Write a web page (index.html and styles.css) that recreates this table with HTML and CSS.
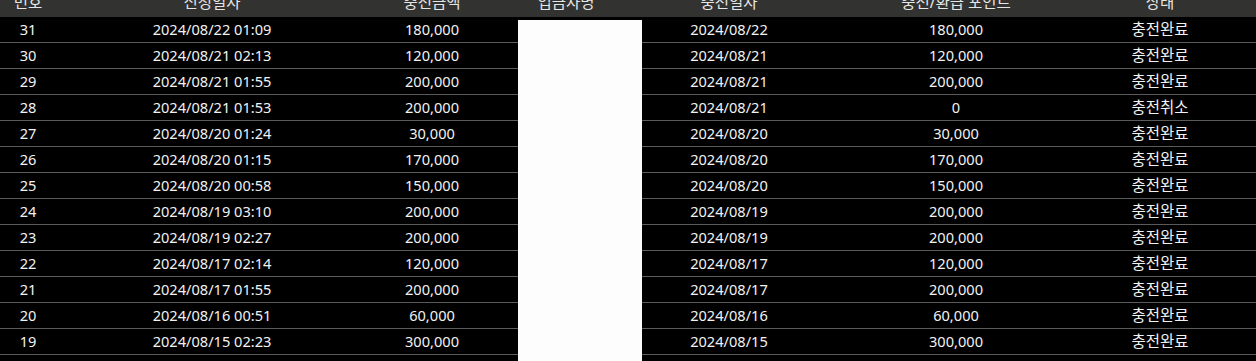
FILE: index.html
```html
<!DOCTYPE html>
<html lang="ko">
<head>
<meta charset="utf-8">
<title>충전내역</title>
<link rel="stylesheet" href="styles.css">
</head>
<body>
<div class="wrap">
  <table class="list">
    <colgroup>
      <col class="c-no"><col class="c-req"><col class="c-amt"><col class="c-name"><col class="c-date"><col class="c-pt"><col class="c-st">
    </colgroup>
    <thead>
      <tr><th>번호</th><th>신청일자</th><th>충전금액</th><th>입금자명</th><th>충전일자</th><th>충전/환급 포인트</th><th class="last">상태</th></tr>
    </thead>
    <tbody>
      <tr><td>31</td><td>2024/08/22 01:09</td><td>180,000</td><td></td><td>2024/08/22</td><td>180,000</td><td class="last">충전완료</td></tr>
      <tr><td>30</td><td>2024/08/21 02:13</td><td>120,000</td><td></td><td>2024/08/21</td><td>120,000</td><td class="last">충전완료</td></tr>
      <tr><td>29</td><td>2024/08/21 01:55</td><td>200,000</td><td></td><td>2024/08/21</td><td>200,000</td><td class="last">충전완료</td></tr>
      <tr><td>28</td><td>2024/08/21 01:53</td><td>200,000</td><td></td><td>2024/08/21</td><td>0</td><td class="last">충전취소</td></tr>
      <tr><td>27</td><td>2024/08/20 01:24</td><td>30,000</td><td></td><td>2024/08/20</td><td>30,000</td><td class="last">충전완료</td></tr>
      <tr><td>26</td><td>2024/08/20 01:15</td><td>170,000</td><td></td><td>2024/08/20</td><td>170,000</td><td class="last">충전완료</td></tr>
      <tr><td>25</td><td>2024/08/20 00:58</td><td>150,000</td><td></td><td>2024/08/20</td><td>150,000</td><td class="last">충전완료</td></tr>
      <tr><td>24</td><td>2024/08/19 03:10</td><td>200,000</td><td></td><td>2024/08/19</td><td>200,000</td><td class="last">충전완료</td></tr>
      <tr><td>23</td><td>2024/08/19 02:27</td><td>200,000</td><td></td><td>2024/08/19</td><td>200,000</td><td class="last">충전완료</td></tr>
      <tr><td>22</td><td>2024/08/17 02:14</td><td>120,000</td><td></td><td>2024/08/17</td><td>120,000</td><td class="last">충전완료</td></tr>
      <tr><td>21</td><td>2024/08/17 01:55</td><td>200,000</td><td></td><td>2024/08/17</td><td>200,000</td><td class="last">충전완료</td></tr>
      <tr><td>20</td><td>2024/08/16 00:51</td><td>60,000</td><td></td><td>2024/08/16</td><td>60,000</td><td class="last">충전완료</td></tr>
      <tr><td>19</td><td>2024/08/15 02:23</td><td>300,000</td><td></td><td>2024/08/15</td><td>300,000</td><td class="last">충전완료</td></tr>
    </tbody>
  </table>
  <div class="redact"></div>
</div>
</body>
</html>
```

FILE: styles.css
```css
html, body {
  margin: 0;
  padding: 0;
  background: #000;
  overflow: hidden;
}
body {
  font-family: "Noto Sans", "Noto Sans CJK KR", sans-serif;
  font-size: 14.6px;
  color: #f2f2f2;
}
.wrap {
  position: relative;
  height: 361px;
  overflow: hidden;
}
.list {
  width: 1256px;
  table-layout: fixed;
  border-collapse: collapse;
  margin-top: -9px;
}
.c-no { width: 56px; }
.c-req { width: 312px; }
.c-amt { width: 128px; }
.c-name { width: 140px; }
.c-date { width: 186px; }
.c-pt { width: 268px; }
.c-st { width: 166px; }
.list th {
  height: 22px;
  padding: 0 0 4px;
  background: #323231;
  color: #e6e6e6;
  font-weight: 400;
  font-size: 15.5px;
  text-align: center;
  line-height: 22px;
  overflow: hidden;
}
.list td {
  height: 25px;
  padding: 0;
  text-align: center;
  line-height: 25px;
  border-bottom: 1px solid #5a5a5a;
  white-space: nowrap;
}
.list td.last {
  font-size: 15.5px;
}
.list .last {
  padding-right: 26px;
}
.redact {
  position: absolute;
  left: 518px;
  top: 20px;
  width: 124px;
  bottom: 0;
  background: #fdfdfd;
}
```
